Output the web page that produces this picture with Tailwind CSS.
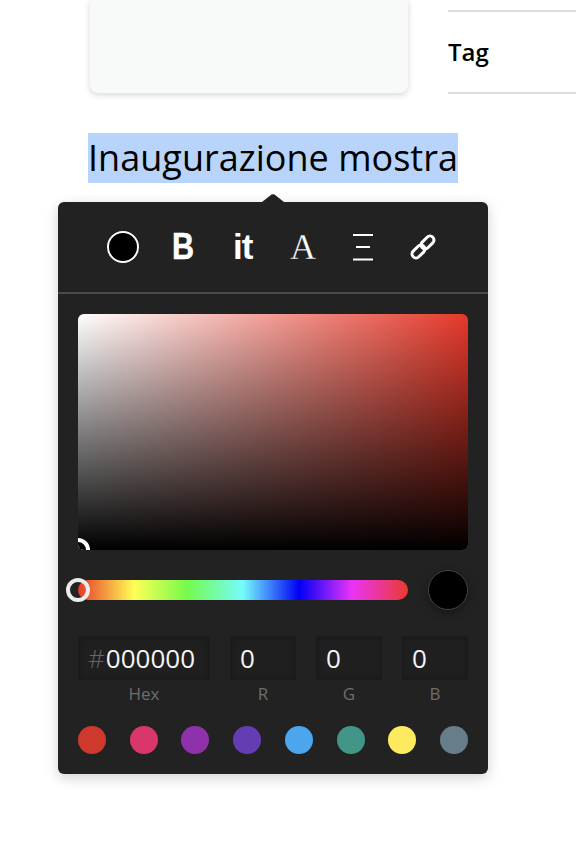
<!doctype html>
<html lang="it">
<head>
<meta charset="utf-8">
<script src="https://cdn.jsdelivr.net/npm/@tailwindcss/browser@4"></script>
</head>
<body class="bg-white">
<div class="w-[576px] h-[844px] overflow-hidden font-['Open_Sans',sans-serif] flex flex-col">
  <div class="flex items-start h-[94px] shrink-0">
    <div class="ml-[90px] w-[318px] h-[93px] bg-[#f8f9f9] rounded-b-[8px] shadow-[0_2px_6px_rgba(0,0,0,0.16)]"></div>
    <div class="ml-[40px] w-[128px] mt-[10px] h-[84px] border-y-2 border-[#dedede] flex items-center">
      <span class="text-[24px] font-semibold text-black leading-none -mt-[1px]">Tag</span>
    </div>
  </div>
  <div class="mt-[39px] ml-[88px] w-[370px] h-[50px] bg-[#b8d4fb] flex items-center justify-center shrink-0">
    <span class="text-[36px] leading-none text-black whitespace-nowrap tracking-[0.02px]">Inaugurazione mostra</span>
  </div>
  <div class="relative mt-[19px] ml-[58px] w-[430px] h-[572px] bg-[#222222] rounded-[6px] shadow-[0_4px_14px_rgba(0,0,0,0.18)] shrink-0">
    <svg class="absolute left-[204px] -top-[8px]" width="22" height="8" viewBox="0 0 22 8"><path d="M0 8 L9.500 .6 Q11 -.3 12.500 .6 L22 8Z" fill="#222222"/></svg>
    <div class="h-[90px] relative">
      <span class="absolute left-[49px] top-[29px] w-[32px] h-[32px] rounded-full bg-black border-2 border-white"></span>
      <span class="absolute left-[112px] top-[26px] text-[36px] leading-[38px] font-bold text-white font-['Liberation_Sans',sans-serif] scale-x-[0.85] [-webkit-text-stroke:0.5px_#ffffff]">B</span>
      <span class="absolute left-[175px] top-[26px] text-[35px] leading-[38px] font-bold text-white font-['Liberation_Sans',sans-serif] tracking-[-1px]">it</span>
      <span class="absolute left-[232px] top-[25px] text-[36px] leading-[40px] text-white font-['Liberation_Serif',serif] [-webkit-text-stroke:0.3px_#222222]">A</span>
      <svg class="absolute left-[294px] top-[32px]" width="22" height="27" viewBox="0 0 22 27" fill="#fff"><rect x="1" y="0" width="20" height="2"/><rect x="4" y="12" width="14" height="2"/><rect x="1" y="24.500" width="20" height="2"/></svg>
      <svg class="absolute left-[352px] top-[32px]" width="26" height="26" viewBox="0 0 26 26" fill="none" stroke="#fff" stroke-width="3"><rect x="10" y="4.500" width="15" height="8" rx="4" transform="rotate(-45 17.500 8.500)"/><rect x="1" y="13.500" width="15" height="8" rx="4" transform="rotate(-45 8.500 17.500)"/></svg>
    </div>
    <div class="h-[2px] bg-[#4a4a4a]"></div>
    <div class="px-[20px] pt-[20px]">
      <div class="relative h-[236px] rounded-[6px] overflow-hidden bg-[#e6392a]">
        <div class="absolute inset-0 bg-[linear-gradient(to_right,#fff,rgba(255,255,255,0))]"></div>
        <div class="absolute inset-0 bg-[linear-gradient(to_top,#000,rgba(0,0,0,0))]"></div>
        <span class="absolute -left-[12px] -bottom-[12px] w-[24px] h-[24px] rounded-full border-[4px] border-white"></span>
      </div>
      <div class="flex items-center justify-between mt-[20px] h-[40px]">
        <div class="relative w-[330px] h-[20px] rounded-full bg-[linear-gradient(to_right,#e63a2a_0%,#ffff55_17%,#75fb4c_33%,#75fbfd_50%,#0000f5_67%,#ea33f7_83%,#eb3a2e_100%)]">
          <span class="absolute -left-[12px] -top-[2px] w-[24px] h-[24px] rounded-full border-[4px] border-[#ececec]"></span>
        </div>
        <span class="w-[40px] h-[40px] rounded-full bg-black border border-[#444444] shadow-[0_3px_8px_rgba(0,0,0,0.35)]"></span>
      </div>
      <div class="flex justify-between mt-[26px]">
        <div class="w-[132px]">
          <div class="h-[44px] rounded-[3px] bg-[#1f1f1f] shadow-[inset_0_0_6px_rgba(0,0,0,0.25)] flex items-center pl-[10px] text-[26px] leading-none">
            <span class="text-[#666666] font-light mr-[1px]">#</span><span class="text-[#f4f4f4]">000000</span>
          </div>
          <div class="text-center text-[17px] leading-[28px] text-[#6e6e6e]">Hex</div>
        </div>
        <div class="w-[66px]">
          <div class="h-[44px] rounded-[3px] bg-[#1f1f1f] shadow-[inset_0_0_6px_rgba(0,0,0,0.25)] flex items-center pl-[10px] text-[26px] leading-none text-[#f4f4f4]">0</div>
          <div class="text-center text-[17px] leading-[28px] text-[#6e6e6e]">R</div>
        </div>
        <div class="w-[66px]">
          <div class="h-[44px] rounded-[3px] bg-[#1f1f1f] shadow-[inset_0_0_6px_rgba(0,0,0,0.25)] flex items-center pl-[10px] text-[26px] leading-none text-[#f4f4f4]">0</div>
          <div class="text-center text-[17px] leading-[28px] text-[#6e6e6e]">G</div>
        </div>
        <div class="w-[66px]">
          <div class="h-[44px] rounded-[3px] bg-[#1f1f1f] shadow-[inset_0_0_6px_rgba(0,0,0,0.25)] flex items-center pl-[10px] text-[26px] leading-none text-[#f4f4f4]">0</div>
          <div class="text-center text-[17px] leading-[28px] text-[#6e6e6e]">B</div>
        </div>
      </div>
      <div class="flex justify-between mt-[18px]">
        <span class="w-[28px] h-[28px] rounded-full bg-[#cf392d]"></span>
        <span class="w-[28px] h-[28px] rounded-full bg-[#d93769]"></span>
        <span class="w-[28px] h-[28px] rounded-full bg-[#8f31aa]"></span>
        <span class="w-[28px] h-[28px] rounded-full bg-[#643db2]"></span>
        <span class="w-[28px] h-[28px] rounded-full bg-[#4ba6ee]"></span>
        <span class="w-[28px] h-[28px] rounded-full bg-[#419688]"></span>
        <span class="w-[28px] h-[28px] rounded-full bg-[#fdea5e]"></span>
        <span class="w-[28px] h-[28px] rounded-full bg-[#667d8a]"></span>
      </div>
    </div>
  </div>
</div>
</body>
</html>
